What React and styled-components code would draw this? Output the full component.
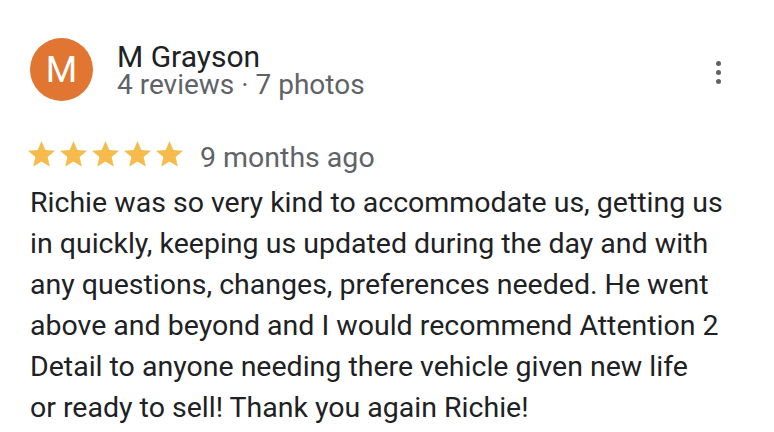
import React from "react";
import styled, { createGlobalStyle } from "styled-components";

const GlobalStyle = createGlobalStyle`
  html, body {
    margin: 0;
    padding: 0;
    background: #ffffff;
  }
  body {
    font-family: Roboto, "Noto Sans", Arial, sans-serif;
    -webkit-font-smoothing: antialiased;
  }
`;

const Card = styled.div`
  width: 774px;
  height: 432px;
  box-sizing: border-box;
  padding: 38px 30px 0 30px;
  overflow: hidden;
`;

const Header = styled.div`
  display: flex;
  align-items: flex-start;
  gap: 24px;
`;

const Avatar = styled.div`
  width: 63px;
  height: 63px;
  border-radius: 50%;
  background: #e07631;
  color: #ffffff;
  display: flex;
  align-items: center;
  justify-content: center;
  font-size: 36px;
  flex-shrink: 0;
`;

const Author = styled.div`
  flex: 1;
  display: flex;
  flex-direction: column;
  margin-top: 5px;
`;

const Name = styled.div`
  font-size: 30px;
  line-height: 28px;
  color: #202124;
`;

const Meta = styled.div`
  font-size: 28px;
  line-height: 28px;
  color: #5f6368;
`;

const MoreButton = styled.button`
  border: none;
  background: none;
  padding: 0;
  margin: 23px 22px 0 0;
  width: 8px;
  display: flex;
  flex-direction: column;
  align-items: center;
  gap: 4px;
`;

const Dot = styled.span`
  width: 5px;
  height: 5px;
  border-radius: 50%;
  background: #5f6368;
`;

const RatingRow = styled.div`
  display: flex;
  align-items: baseline;
  margin-top: 40px;
  gap: 17px;
`;

const Stars = styled.div`
  display: flex;
  align-items: flex-end;
  gap: 5px;
  margin-left: -2px;
`;

const When = styled.span`
  font-size: 28.5px;
  line-height: 28px;
  color: #5f6368;
`;

const Body = styled.p`
  margin: 10px 0 0 0;
  font-size: 28.5px;
  line-height: 41px;
  color: #202124;
  white-space: nowrap;
`;

const Star = () => (
  <svg width="27" height="25.6" viewBox="2 2 20 19" style={{ display: "block" }}>
    <path
      fill="#f6bb4a"
      d="M12 17.27L18.18 21l-1.64-7.03L22 9.24l-7.19-.61L12 2 9.19 8.63 2 9.24l5.46 4.73L5.82 21z"
    />
  </svg>
);

const lines = [
  "Richie was so very kind to accommodate us, getting us",
  "in quickly, keeping us updated during the day and with",
  "any questions, changes, preferences needed. He went",
  "above and beyond and I would recommend Attention 2",
  "Detail to anyone needing there vehicle given new life",
  "or ready to sell! Thank you again Richie!",
];

export default function App() {
  return (
    <>
      <GlobalStyle />
      <Card>
        <Header>
          <Avatar>M</Avatar>
          <Author>
            <Name>M Grayson</Name>
            <Meta>4 reviews · 7 photos</Meta>
          </Author>
          <MoreButton aria-label="More">
            <Dot />
            <Dot />
            <Dot />
          </MoreButton>
        </Header>
        <RatingRow>
          <Stars>
            {[0, 1, 2, 3, 4].map((i) => (
              <Star key={i} />
            ))}
          </Stars>
          <When>9 months ago</When>
        </RatingRow>
        <Body>
          {lines.map((line, i) => (
            <React.Fragment key={i}>
              {line}
              {i < lines.length - 1 && <br />}
            </React.Fragment>
          ))}
        </Body>
      </Card>
    </>
  );
}
